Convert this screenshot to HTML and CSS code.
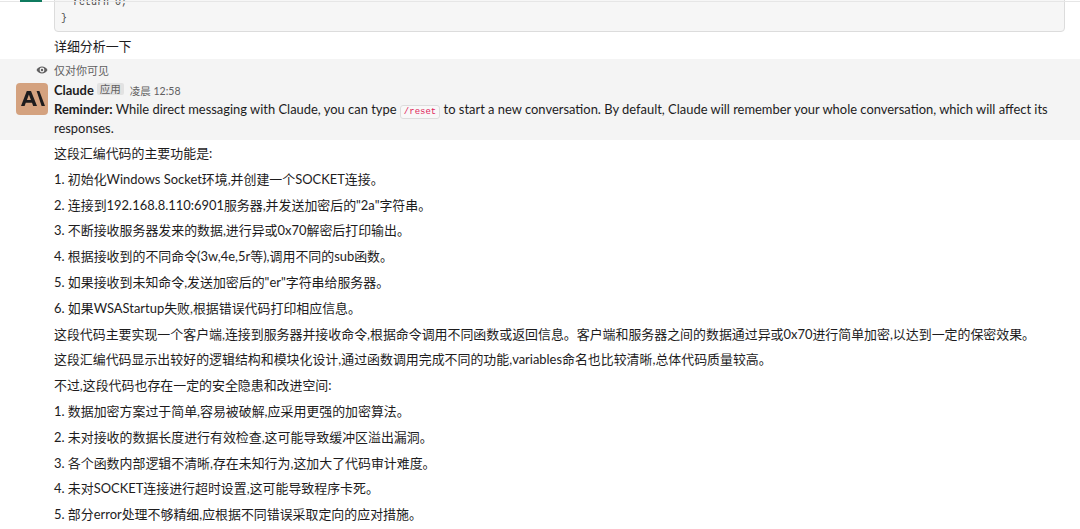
FILE: index.html
```html
<!DOCTYPE html>
<html lang="zh-CN">
<head>
    <meta charset="UTF-8">
    <title>Claude</title>
    <link rel="stylesheet" href="styles.css">
</head>
<body>
    <div class="user-msg">
        <div class="user-avatar"></div>
        <div class="msg-body">
            <pre class="code-block">  return 0;
}</pre>
            <p class="user-text">详细分析一下</p>
        </div>
    </div>
    <div class="ephemeral">
        <div class="only-you">
            <svg class="eye" viewBox="0 0 12 12" width="12" height="12">
                <path d="M0.5 6C1.6 3.7 3.6 2.5 6 2.5S10.4 3.7 11.5 6C10.4 8.3 8.4 9.5 6 9.5S1.6 8.3 0.5 6Z" fill="#616061"/>
                <circle cx="6" cy="6" r="2.4" fill="#f4f4f4"/>
                <circle cx="6" cy="6" r="1.2" fill="#616061"/>
            </svg>
            <span>仅对你可见</span>
        </div>
        <div class="msg-row">
            <div class="bot-avatar">
                <svg viewBox="0 0 32 32" width="32" height="32">
                    <path d="M5 23L10.8 8H15L21 23H17.2L16 19.8H9.8L8.6 23ZM10.9 17H14.9L12.9 11.6Z" fill="#1d1c1d"/>
                    <path d="M20.6 8H23.4L29 23H25.6Z" fill="#1d1c1d"/>
                </svg>
            </div>
            <div class="msg-body">
                <div class="msg-head">
                    <span class="sender">Claude</span>
                    <span class="app-tag">应用</span>
                    <span class="time">凌晨 12:58</span>
                </div>
                <p class="reminder"><b>Reminder:</b> While direct messaging with Claude, you can type <code>/reset</code> to start a new conversation. By default, Claude will remember your whole conversation, which will affect its responses.</p>
            </div>
        </div>
    </div>
    <div class="answer">
        <p>这段汇编代码的主要功能是:</p>
        <p>1. 初始化Windows Socket环境,并创建一个SOCKET连接。</p>
        <p>2. 连接到192.168.8.110:6901服务器,并发送加密后的"2a"字符串。</p>
        <p>3. 不断接收服务器发来的数据,进行异或0x70解密后打印输出。</p>
        <p>4. 根据接收到的不同命令(3w,4e,5r等),调用不同的sub函数。</p>
        <p>5. 如果接收到未知命令,发送加密后的"er"字符串给服务器。</p>
        <p>6. 如果WSAStartup失败,根据错误代码打印相应信息。</p>
        <p>这段代码主要实现一个客户端,连接到服务器并接收命令,根据命令调用不同函数或返回信息。客户端和服务器之间的数据通过异或0x70进行简单加密,以达到一定的保密效果。</p>
        <p>这段汇编代码显示出较好的逻辑结构和模块化设计,通过函数调用完成不同的功能,variables命名也比较清晰,总体代码质量较高。</p>
        <p>不过,这段代码也存在一定的安全隐患和改进空间:</p>
        <p>1. 数据加密方案过于简单,容易被破解,应采用更强的加密算法。</p>
        <p>2. 未对接收的数据长度进行有效检查,这可能导致缓冲区溢出漏洞。</p>
        <p>3. 各个函数内部逻辑不清晰,存在未知行为,这加大了代码审计难度。</p>
        <p>4. 未对SOCKET连接进行超时设置,这可能导致程序卡死。</p>
        <p>5. 部分error处理不够精细,应根据不同错误采取定向的应对措施。</p>
    </div>
</body>
</html>
```

FILE: styles.css
```css
* {
    margin: 0;
    padding: 0;
    box-sizing: border-box;
}

html, body {
    height: 529px;
    overflow: hidden;
}

body {
    font-family: Lato, "Noto Sans CJK SC", sans-serif;
    font-size: 12.93px;
    color: #1d1c1d;
    background-color: #ffffff;
}

.user-msg {
    position: relative;
    display: flex;
    height: 59px;
    padding-left: 20px;
    overflow: hidden;
}

/* thin line across the top, drawn over the code block */
.user-msg::after {
    content: "";
    position: absolute;
    top: 1px;
    left: 0;
    right: 0;
    height: 1px;
    background-color: #e6e6e6;
}

.user-avatar {
    position: relative;
    z-index: 1;
    width: 22px;
    height: 2px;
    margin-right: 12px;
    background-color: #0f7b5f;
}

.msg-body {
    flex: 1;
    min-width: 0;
}

.code-block {
    width: 1011px;
    height: 38px;
    margin-top: -6px;
    padding: 0 0 0 6px;
    font-family: "Liberation Mono", monospace;
    font-size: 10px;
    line-height: 16px;
    color: #4a4a4a;
    background-color: #f6f6f6;
    border: 1px solid #dcdcdc;
    border-radius: 4px;
}

.user-text {
    margin-top: 4px;
    line-height: 20px;
}

.ephemeral {
    height: 81px;
    padding: 3px 28px 0 16px;
    background-color: #f4f4f4;
}

.only-you {
    display: flex;
    align-items: center;
    height: 16px;
    padding-left: 20px;
    font-size: 11px;
    color: #616061;
}

.eye {
    margin-right: 6px;
}

.msg-row {
    display: flex;
    padding-top: 4px;
}

.bot-avatar {
    width: 32px;
    height: 32px;
    margin: 1px 6px 0 0;
    background-color: #d4a27f;
    border-radius: 4px;
}

.msg-head {
    display: flex;
    align-items: center;
    height: 20px;
    margin-top: -2px;
}

.sender {
    font-weight: 700;
}

.app-tag {
    margin-left: 3px;
    margin-bottom: 3px;
    padding: 0 3px;
    font-size: 10.5px;
    line-height: 12px;
    color: #616061;
    background-color: #e2e2e2;
    border-radius: 2px;
}

.time {
    margin-left: 6px;
    font-size: 10.5px;
    color: #616061;
}

.reminder {
    line-height: 19px;
}

code {
    padding: 1px 3px;
    font-family: "Liberation Mono", monospace;
    font-size: 9px;
    line-height: 1;
    color: #e01e5a;
    background-color: #f8f8f8;
    border: 1px solid #dddddd;
    border-radius: 3px;
}

.answer {
    display: flex;
    flex-direction: column;
    gap: 6px;
    padding: 4px 16px 0 54px;
}

.answer p {
    line-height: 19.8px;
}
```
